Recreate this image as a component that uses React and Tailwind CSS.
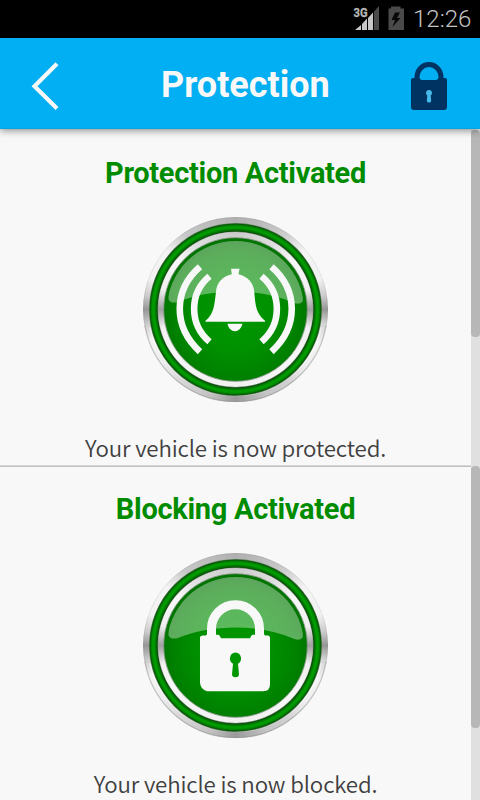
import React from 'react';

function StatusBar() {
  return (
    <div className="flex h-[38px] shrink-0 items-center justify-end bg-black pr-[8px]">
      <svg className="mr-px h-[38px] w-[60px]" viewBox="0 0 60 38">
        <text x="1.500" y="17" fontSize="13.500" fontWeight="700" fill="#b8b8b8" stroke="#b8b8b8" strokeWidth="0.300" textLength="14" lengthAdjust="spacingAndGlyphs" className="font-['Roboto',sans-serif]">3G</text>
        <path d="M3 30L9 25V30Z" fill="#c8c8c8" />
        <path d="M10 30V24L15 18.500V30Z" fill="#c8c8c8" />
        <path d="M16 30V18L21 12.500V30Z" fill="#c8c8c8" />
        <path d="M22 30V11.500L27 6V30Z" fill="#4a4a4a" />
        <path d="M36.500 8.500H39V6.500H48.500V8.500H52V30H36.500Z" fill="#4a4a4a" />
        <path d="M43 12.500L39.500 20H43L40.500 27L48.500 18H45L48 12.500Z" fill="#080808" />
      </svg>
      <span className="w-[59px] whitespace-nowrap text-[24px] leading-[38px] text-[#c4c4c4] font-light">12:26</span>
    </div>
  );
}

function Header() {
  return (
    <header className="relative z-10 flex h-[91px] shrink-0 items-center justify-between border-b border-[#02a5e3] bg-[#02aff2] shadow-[0_1px_8px_rgba(0,0,0,0.5)]">
      <svg className="h-[91px] w-[92px]" viewBox="0 0 92 91">
        <path d="M57 25.800L34.500 48.300L57 70.500" fill="none" stroke="#f8f8f8" strokeWidth="4.200" />
      </svg>
      <h1 className="ml-[12px] mt-[4px] w-[170px] whitespace-nowrap text-[36px] font-bold leading-[87px] text-[#f8f8f8]">Protection</h1>
      <svg className="h-[91px] w-[92px]" viewBox="388 38 92 91">
        <path d="M417 84V77A12 12.500 0 0 1 441 77V84" fill="none" stroke="#003362" strokeWidth="5" />
        <path d="M413 78H419.500Q420.500 80 422 80H436Q437.500 80 438.500 78H445Q447 78 447 80V107Q447 110 444 110H414Q411 110 411 107V80Q411 78 413 78Z" fill="#003362" />
        <path d="M429 90A3 3 0 0 1 430.700 95.500L431.200 101Q431 102.500 429 102.500Q427 102.500 426.800 101L427.300 95.500A3 3 0 0 1 429 90Z" fill="#45b9ea" />
      </svg>
    </header>
  );
}

function Bell() {
  return (
    <g fill="#f8f8f8">
      <path d="M101 63.500H109.500L108.500 69C118 71 123.500 78 124.200 86C125.500 101 126 108 135 115.500V116.500H75.500V115.500C83.500 109 84.500 101 86 86C87 77 92.500 71 101.800 69Z" />
      <path d="M97.500 118.500H112.500C111 123.200 108.500 126 105 126S98.500 123.200 97.500 118.500Z" />
      <g fill="none" stroke="#f8f8f8">
        <path d="M79.500 71C59 88 59 119 79.500 136.500" strokeWidth="6.600" />
        <path d="M70 61.500C43 85 43 122 70 146.500" strokeWidth="6.600" />
        <path d="M131.500 71C152 88 152 119 131.500 136.500" strokeWidth="6.600" />
        <path d="M141.500 61.500C168.500 85 168.500 122 141.500 146.500" strokeWidth="6.600" />
      </g>
    </g>
  );
}

function Padlock() {
  return (
    <g>
      <path d="M81.500 98V87.500A24 24 0 0 1 129.500 87.500V98" fill="none" stroke="#f8f8f8" strokeWidth="9" />
      <path d="M73 94.300H76V93.500H88.500Q90 94 91 97H120Q121 94 122.500 93.500H135V94.300H138Q140 94.500 140 96.500V143Q140 150 133 150H77Q70 147.500 70 141V96.500Q70 94.500 73 94.300Z" fill="#f8f8f8" />
      <path d="M105.500 111.300A6 6 0 0 1 108 122.500L109 133Q109 136 105.500 136T102 133L103 122.500A6 6 0 0 1 105.500 111.300Z" fill="#009600" />
    </g>
  );
}

function Medallion({ id, children }) {
  const disc = `${id}-disc`;
  const clip = `${id}-clip`;
  const ring = `${id}-ring`;
  return (
    <div className="relative flex h-[185px] w-[185px] items-center justify-center rounded-full bg-[conic-gradient(#b0b0b0_0deg,#bcbcbc_18deg,#cecece_34deg,#e2e2e2_42deg,#f4f4f4_50deg,#f2f2f2_70deg,#cccccc_81deg,#969696_90deg,#d4d4d4_99deg,#f4f4f4_112deg,#eeeeee_130deg,#d0d0d0_145deg,#c4c4c4_160deg,#9a9a9a_180deg,#c0c0c0_195deg,#d6d6d6_215deg,#eeeeee_235deg,#f4f4f4_250deg,#d0d0d0_260deg,#969696_270deg,#cccccc_279deg,#f2f2f2_290deg,#f4f4f4_310deg,#dedede_318deg,#c8c8c8_326deg,#bcbcbc_342deg,#b0b0b0_360deg)]">
      <div className="h-[155px] w-[155px] rounded-full bg-[conic-gradient(#cbcbcb_0deg,#dedede_30deg,#f8f8f8_50deg,#f0f0f0_75deg,#a0a0a0_90deg,#f0f0f0_104deg,#f8f8f8_130deg,#f2f2f2_160deg,#f0f0f0_180deg,#f4f4f4_210deg,#f8f8f8_240deg,#f0f0f0_256deg,#a0a0a0_270deg,#f0f0f0_285deg,#f8f8f8_310deg,#dedede_330deg,#cbcbcb_360deg)]" />
      <svg className="absolute inset-0 h-[185px] w-[185px]" viewBox="13 11.800 185 185">
        <defs>
          <radialGradient id={disc} cx="0.5" cy="0.54" r="0.52">
            <stop offset="0" stopColor="#009900" />
            <stop offset="0.5" stopColor="#009000" />
            <stop offset="0.85" stopColor="#008000" />
            <stop offset="1" stopColor="#007300" />
          </radialGradient>
          <radialGradient id={ring} gradientUnits="userSpaceOnUse" cx="105.5" cy="104.300" r="86.500">
            <stop offset="0.895" stopColor="#889088" />
            <stop offset="0.905" stopColor="#0b500b" />
            <stop offset="0.922" stopColor="#007800" />
            <stop offset="0.945" stopColor="#00a000" />
            <stop offset="0.968" stopColor="#008c00" />
            <stop offset="0.987" stopColor="#065806" />
            <stop offset="1" stopColor="#6a806a" />
          </radialGradient>
          <clipPath id={clip}><circle cx="105.500" cy="104.300" r="68.500" /></clipPath>
        </defs>
        <circle cx="105.500" cy="104.300" r="92" fill="none" stroke="#808080" strokeOpacity="0.15" />
        <path d="M14.800 120A92 92 0 0 0 196.200 120" fill="none" stroke="#808080" strokeOpacity="0.35" strokeWidth="1.200" />
        <path d="M20 122A87.800 87.800 0 0 0 191 122" fill="none" stroke="#ffffff" strokeOpacity="0.4" strokeWidth="2.500" />
        <circle cx="105.500" cy="104.300" r="82" fill="none" stroke={`url(#${ring})`} strokeWidth="9" />
        <circle cx="105.500" cy="104.300" r="71.800" fill={`url(#${disc})`} stroke="#8b988b" strokeWidth="0.900" />
        <path clipPath={`url(#${clip})`} d="M36 20H175L172.800 96Q171 99.500 165 98C145 89.500 125 86.200 105.500 86.200S65 89.500 47 97Q40 98.500 38.500 94Z" fill="#ffffff" fillOpacity="0.36" />
        {children}
      </svg>
    </div>
  );
}

function Panel({ title, message, thumb, edge, children }) {
  return (
    <section className="flex h-[336px] shrink-0 bg-[#f8f8f8]">
      <div className={`flex h-[336px] w-[471px] flex-col items-center border-y border-b-[#d6d6d6] ${edge}`}>
        <h2 className="mt-[25px] whitespace-nowrap text-[29px] font-bold leading-[34px] tracking-[-0.3px] text-[#008c00]">{title}</h2>
        <div className="mt-[27px]">{children}</div>
        <p className="mt-[29px] whitespace-nowrap font-['Noto_Sans_CJK_SC',sans-serif] text-[22.3px] font-[350] leading-[32px] tracking-[-0.14px] text-[#404040]">{message}</p>
      </div>
      <div className="w-[9px] bg-[#e0e0e0]">
        <div className={`w-[9px] rounded-[4px] bg-[#b7b7b7] ${thumb}`} />
      </div>
    </section>
  );
}

export default function App() {
  return (
    <main className="flex h-[800px] w-[480px] flex-col overflow-hidden bg-[#f8f8f8] font-['Roboto',sans-serif]">
      <StatusBar />
      <Header />
      <div className="flex flex-col pt-[1px]">
        <Panel title="Protection Activated" message="Your vehicle is now protected." thumb="h-[207px]" edge="border-t-[#f8f8f8]">
          <Medallion id="alarm"><Bell /></Medallion>
        </Panel>
        <Panel title="Blocking Activated" message="Your vehicle is now blocked." thumb="h-[262px]" edge="border-t-[#c0c0c0]">
          <Medallion id="lock"><Padlock /></Medallion>
        </Panel>
      </div>
    </main>
  );
}
